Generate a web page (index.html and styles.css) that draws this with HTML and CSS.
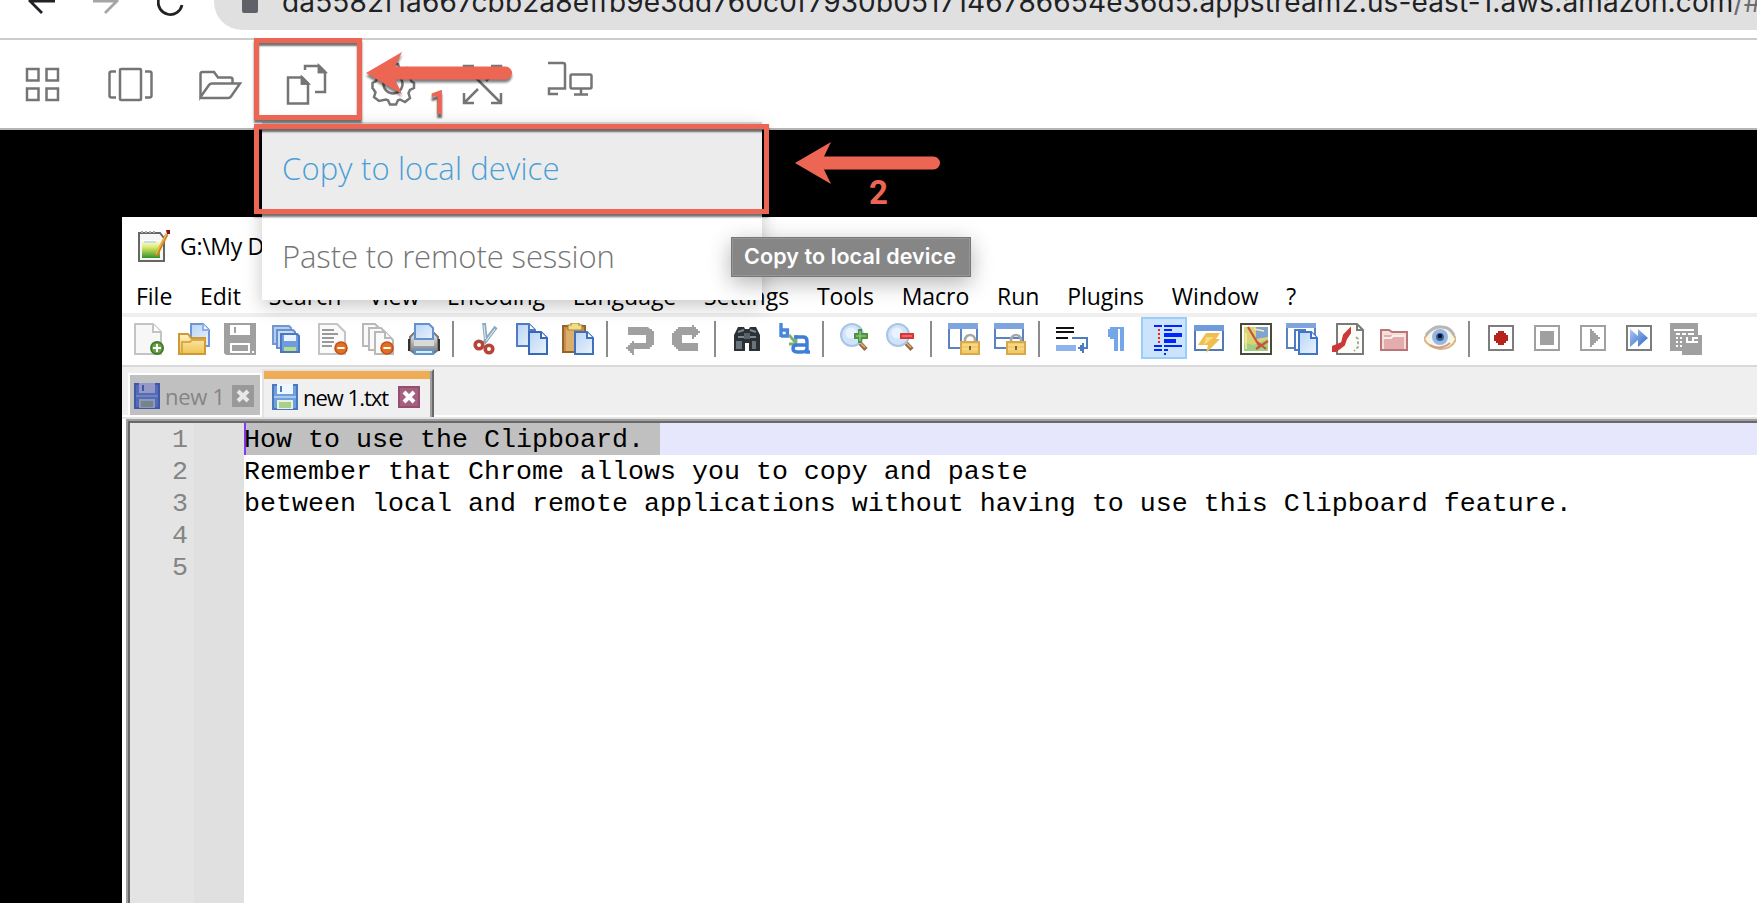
FILE: index.html
```html
<!DOCTYPE html>
<html lang="en">
<head>
<meta charset="utf-8">
<title>AppStream session</title>
<link rel="stylesheet" href="styles.css">
</head>
<body>
<svg class="defs" width="0" height="0">
  <defs>
    <linearGradient id="sky" x1="0" y1="0" x2="1" y2="1"><stop offset="0" stop-color="#b9d5f6"/><stop offset="1" stop-color="#eaf3fd"/></linearGradient>
    <linearGradient id="gold" x1="0" y1="0" x2="0" y2="1"><stop offset="0" stop-color="#fff3c4"/><stop offset="1" stop-color="#eec24f"/></linearGradient>
    <linearGradient id="blue" x1="0" y1="0" x2="1" y2="1"><stop offset="0" stop-color="#a9c8f3"/><stop offset="1" stop-color="#2f66c4"/></linearGradient>
    <linearGradient id="steel" x1="0" y1="0" x2="0" y2="1"><stop offset="0" stop-color="#eee"/><stop offset="1" stop-color="#777"/></linearGradient>
    <linearGradient id="grass" x1="0" y1="0" x2="0" y2="1"><stop offset="0" stop-color="#fff"/><stop offset=".4" stop-color="#dfe96a"/><stop offset="1" stop-color="#2f9427"/></linearGradient>
    <symbol id="minus" viewBox="0 0 7 7"><circle cx="3.5" cy="3.5" r="3.4" fill="#c4501a"/><circle cx="3.5" cy="3.5" r="2.6" fill="#e2701f"/><path d="M1.7 3h3.6v1H1.700z" fill="#fff"/></symbol>
    <symbol id="lens" viewBox="0 0 16 16"><path d="M9.500 9.500l3.500 3.700" stroke="#9b6a43" stroke-width="2.200"/><path d="M9.500 9.200l3 3" stroke="#d9b083" stroke-width=".7"/><circle cx="6" cy="6" r="5.500" fill="#cfe3fa" stroke="#a9c4e6"/><circle cx="5.500" cy="5" r="2.800" fill="#e8f3fe"/></symbol>
    <symbol id="lock" viewBox="0 0 10 11"><path d="M2.500 5V3.500a2.500 2.500 0 0 1 5 0V5" fill="none" stroke="#a8a8a8" stroke-width="1.300"/><rect x=".5" y="4.500" width="9" height="6" fill="#f3cb69" stroke="#d9a84a"/><path d="M1 6h8M1 8h8" stroke="#fbe3a0" stroke-width=".6"/><rect x="4.500" y="6.500" width="1" height="2" fill="#7d6336"/></symbol>
    <symbol id="floppy" viewBox="0 0 13 13"><rect width="13" height="13" fill="#4a78bd"/><rect x="1" y="1" width="11" height="11" fill="#6f9fdf"/><rect x="2.500" width="8" height="5" fill="#eef6ff"/><rect x="4" y="1" width="1" height="3" fill="#4a78bd"/><rect x="1" y="6" width="11" height="1" fill="#a9c8ee"/><rect x="2.500" y="8" width="8" height="4.500" fill="#e7f2e0"/><rect x="3.500" y="9" width="6" height="3" fill="#a9d08a"/></symbol>
  </defs>
</svg>

<header class="browser">
  <div class="nav">
    <svg class="nav-back" width="28" height="30" viewBox="0 0 28 30" fill="none" stroke="#202124" stroke-width="2.800"><path d="M27 1H3M14 13L2 1l12-12"/></svg>
    <svg class="nav-forward" width="28" height="30" viewBox="0 0 28 30" fill="none" stroke="#a5a5a5" stroke-width="2.800"><path d="M0 1h24M12 13L24 1 12-11"/></svg>
    <svg class="nav-reload" width="28" height="30" viewBox="0 0 28 30" fill="none" stroke="#202124" stroke-width="2.800"><path d="M1.500 0a12 12 0 0 0 23.500 5"/></svg>
  </div>
  <div class="address">
    <span class="padlock"></span>
    <span class="url">da5582f1a667cbb2a8effb9e3dd760c0f7930b0517146786654e36d5.appstream2.us-east-1.aws.amazon.com<span class="url-path">/#</span></span>
  </div>
</header>

<nav class="session-bar">
  <svg class="session-icon" viewBox="0 0 48 48"><path d="M4 9h11.500v11.500H4zM23.500 9H35v11.500H23.500zM4 28.500h11.500V40H4zM23.500 28.500H35V40H23.500z"/></svg>
  <svg class="session-icon icon-windows" viewBox="0 0 48 48"><rect x="13" y="9" width="21" height="31" rx="1"/><path d="M9 11.500H4.500q-2 0-2 2v22q0 2 2 2H9M38 11.500h4.500q2 0 2 2v22q0 2-2 2H38"/></svg>
  <svg class="session-icon icon-folder" viewBox="0 0 48 48"><path d="M4.500 36V14q0-2 2-2H18l4 5.500h12.500q2 0 2 2V23M4.500 37l8.500-12q1-1.500 3-1.500h28L35 36.500q-1 1.500-3 1.500H6q-2 0-1.500-1.500z"/></svg>
  <svg class="session-icon icon-copy" viewBox="0 0 48 48"><path d="M5 17.500h14l6 6V43.500H5zM19 17.500v6h6M22 10V6h14l6 6v20H32M36 6v6h6"/><path class="solid" d="M19 17.500l6 6h-6zM36 6l6 6h-6z"/></svg>
  <svg class="session-icon icon-gear" viewBox="0 0 48 48"><path d="M20 4h8l1.500 5.500 3 1.300 5-2.800 5.500 5.500-2.800 5 1.300 3L44 23v5l-4 2-1.500 3 1.500 5-5 4-5-2.500-2 .8-2 4.200h-6l-2-4.200-2-.8L9 41l-5-4 1.500-4.500L4 30l-1.500-2v-5l3.500-2 1.300-3-2.800-5L10 7.500l5 2.800 3-1.300z"/><circle cx="23" cy="24" r="9.500"/></svg>
  <svg class="session-icon icon-expand" viewBox="0 0 48 48"><path d="M5 16V6h10M5 6l37 37M32 43h10V33M32 6h10v10M42 6L27 21M19 29L5 43M5 33v10h10"/></svg>
  <svg class="session-icon icon-displays" viewBox="0 0 48 48"><path d="M1 3h15q2 0 2 2v23.500H2V34h9"/><rect x="23.500" y="14.500" width="21" height="14" rx="1.500"/><path d="M34 29v5M27 34.500h14"/></svg>
</nav>

<main class="remote">
  <section class="editor-window">
    <div class="title-bar">
      <svg class="app-icon" viewBox="0 0 16 16"><path d="M.5 1.500H11l2 2.500v11.500H.5z" fill="#f6f6f6" stroke="#666"/><path d="M1.500 1h8" stroke="#aaa" stroke-dasharray="1 1"/><path d="M2 5h9v9H2z" fill="url(#grass)"/><path d="M3 6h6" stroke="#c9dbe8"/><path d="M14.500 2L9 13" stroke="#c9841d" stroke-width="1.600"/><path d="M14.200 2L9 12" stroke="#f2c35c" stroke-width=".6"/><path d="M14 0h2v2h-1.500z" fill="#8a1212"/></svg>
      <span>G:\My D</span>
    </div>
    <div class="menu-bar">
      <span>File</span><span>Edit</span><span>Search</span><span>View</span><span>Encoding</span><span>Language</span><span>Settings</span><span>Tools</span><span>Macro</span><span>Run</span><span>Plugins</span><span>Window</span><span>?</span>
    </div>
    <div class="tool-bar">
      <div class="tool"><svg viewBox="0 0 16 16"><path d="M1.500.5h9l4 4v11h-13z" fill="#f7f7f7" stroke="#c4c4c4"/><path d="M10.500.5v4h4" fill="#fff" stroke="#c4c4c4"/><circle cx="12.500" cy="12.500" r="3.500" fill="#3f7a28"/><circle cx="12.500" cy="12.500" r="2.600" fill="#69a345"/><path d="M12 10.500h1V12h1.500v1H13v1.500h-1V13h-1.500v-1H12z" fill="#fff"/></svg></div>
      <div class="tool"><svg viewBox="0 0 16 16"><path d="M6.500.5h6l3 3v8h-9z" fill="url(#sky)" stroke="#6f95d8"/><path d="M12.500.5v3h3" fill="#eef5ff" stroke="#8fb0e4"/><path d="M.5 15.500v-10h4.500l1.500 2h7v8z" fill="url(#gold)" stroke="#cf9a33"/><path d="M2 15V9.500h4l1-1h6.500" fill="none" stroke="#d9a94c"/></svg></div>
      <div class="tool"><svg viewBox="0 0 16 16"><path d="M0 0h16v16H1l-1-1z" fill="#a0a0a0"/><path d="M3 1h10v5H3zM3 10h10v5H3z" fill="#fff"/><path d="M5 2h1v3H5zM4 11h8v3H4z" fill="#a0a0a0"/><path d="M14 14h1v1h-1z" fill="#fff"/></svg></div>
      <div class="tool"><svg viewBox="0 0 16 16"><path d="M1.500 1.500h8l1 1v8h-9z" fill="#b5cdf0" stroke="#7397d0"/><path d="M3.500 3.500h8l1 1v8h-9z" fill="#c9dbf5" stroke="#6a90cc"/><path d="M5.500 5.500h8l1 1v8h-9z" fill="#6e9ce2" stroke="#4a78c0"/><path d="M7 6h6v3H7z" fill="#eaf3ff"/><path d="M7 12h6v2H7z" fill="#b7dc83"/></svg></div>
      <div class="tool"><svg viewBox="0 0 16 16"><path d="M1.500.5h9l4 4v11h-13z" fill="#fafafa" stroke="#c4c4c4"/><path d="M3 3.500h6M3 5.500h8M3 7.500h6M3 9.500h6M3 11.500h5" stroke="#999"/><use href="#minus" x="9" y="9" width="7" height="7"/></svg></div>
      <div class="tool"><svg viewBox="0 0 16 16"><g fill="#fafafa" stroke="#b9b9b9"><path d="M.5.5h6l2 2v9h-8z"/><path d="M3.500 2.500h6l2 2v9h-8z"/><path d="M6.500 4.500h5l4 4v7h-9z"/><path d="M11.500 4.500v3h3"/></g><use href="#minus" x="9" y="9" width="7" height="7"/></svg></div>
      <div class="tool"><svg viewBox="0 0 16 16"><path d="M1 7l2-2h10l2 2v6.500l-2 1.500H3l-2-1.500z" fill="url(#steel)" stroke="#777"/><path d="M3.500 8V.5h7l2 2V8z" fill="url(#sky)" stroke="#6293cf"/><path d="M3 8.500h10v3H3z" fill="#d9d9d9"/><path d="M.5 8v6M15.500 8v6" stroke="#333"/><path d="M3.500 13.500h9v2h-9z" fill="#dcecfd" stroke="#5f96cd"/></svg></div>
      <i class="divider"></i>
      <div class="tool"><svg viewBox="0 0 16 16"><path d="M7 0l1 9M13 2L7 10" stroke="#8ba8bd" stroke-width="1.900"/><path d="M7 1l.7 7M12.500 3L8 9" stroke="#dbe8f0" stroke-width=".6"/><circle cx="4.500" cy="11" r="1.900" fill="#fff" stroke="#b5443a" stroke-width="1.800"/><circle cx="9.500" cy="13" r="1.900" fill="#fff" stroke="#b5443a" stroke-width="1.800"/></svg></div>
      <div class="tool"><svg viewBox="0 0 16 16"><path d="M.5.5h6l3 3v8h-9z" fill="url(#sky)" stroke="#4d7cc4"/><path d="M6.500.5v3h3" fill="#fff" stroke="#4d7cc4"/><path d="M6.500 4.500h6l3 3v8h-9z" fill="url(#sky)" stroke="#3769b8"/><path d="M12.500 4.500v3h3" fill="#fff" stroke="#3769b8"/></svg></div>
      <div class="tool"><svg viewBox="0 0 16 16"><rect x=".5" y="1.500" width="11" height="13" fill="#c98f48" stroke="#936329"/><path d="M2 3h4v11H2z" fill="#dcae6c"/><path d="M3 1h1.500V0h4v1H10v2.500H3z" fill="#f4dc83" stroke="#a8853c" stroke-width=".6"/><path d="M6.500 4.500h6l3 3v8h-9z" fill="url(#sky)" stroke="#3f70bc"/><path d="M12.500 4.500v3h3" fill="#fff" stroke="#3f70bc"/></svg></div>
      <i class="divider"></i>
      <div class="tool"><svg viewBox="0 0 16 16" fill="#a0a0a0"><path d="M2 2h10l1 1h1v1h1v7h-1v1h-1v1H5v3H4v-1H3v-1H2v-1H1v-1h1v-1h1v-1h1V9h1v1h6V6H2z"/></svg></div>
      <div class="tool"><svg viewBox="0 0 16 16" fill="#a0a0a0"><path d="M4 2h7V1h1v1h1v1h1v1h1v1h-1v1h-1v1h-1v1h-1V6H6v4h8v4H4v-1H3v-1H2v-1H1V5h1V4h1V3h1z"/></svg></div>
      <i class="divider"></i>
      <div class="tool"><svg viewBox="0 0 16 16"><path d="M3 2h3l.5 1h2L9 2h3l2 4v8H8.500v-4h-2v4H1V6z" fill="#2b3035"/><path d="M3 4.500l3-1M9 3.500l3 1M3 7h3M9 7h3" stroke="#7d8790"/><path d="M2 9h3v4H2zM10 9h2v4h-2z" fill="#69757e"/><path d="M6 5h3v3H6z" fill="#59626b"/></svg></div>
      <div class="tool"><svg viewBox="0 0 16 16" fill="none"><path d="M1.500 0v7M1.500 3.500h3.200v3H1.500" stroke="#4887da" stroke-width="1.700"/><path d="M5.500 6l3.500 4M9 6v4.500H5.500" stroke="#7daf75" stroke-width="1.400"/><path d="M8 7h4.500q2 0 2 2v5.500H16M14 11H9.500q-2 0-2 1.700t2 1.800H12q2.500 0 2.500-2" stroke="#3f7ed8" stroke-width="1.700"/></svg></div>
      <i class="divider"></i>
      <div class="tool"><svg viewBox="0 0 16 16"><use href="#lens" width="16" height="16"/><path d="M9 3h2v2h3v3h-3v2H9V8H7V5h2z" fill="#4e9140"/><path d="M10 4v5M8 6.500h5" stroke="#8bc474" stroke-width=".8"/></svg></div>
      <div class="tool"><svg viewBox="0 0 16 16"><use href="#lens" width="16" height="16"/><path d="M7 5h7v3H7z" fill="#d93636"/><path d="M8 6h5v1H8z" fill="#f06a65"/></svg></div>
      <i class="divider"></i>
      <div class="tool"><svg viewBox="0 0 16 16"><path d="M.5.5h14v12H.5z" fill="#fff" stroke="#5b82c2"/><path d="M0 0h15v3H0z" fill="#7fa5de"/><path d="M6.500 3v9" stroke="#5b82c2"/><use href="#lock" x="6" y="5" width="10" height="11"/></svg></div>
      <div class="tool"><svg viewBox="0 0 16 16"><path d="M.5.5h14v12H.5z" fill="#fff" stroke="#5b82c2"/><path d="M0 0h15v3H0z" fill="#7fa5de"/><path d="M1 7.500h13" stroke="#5b82c2"/><use href="#lock" x="6" y="5" width="10" height="11"/></svg></div>
      <i class="divider"></i>
      <div class="tool"><svg viewBox="0 0 16 16" class="crisp"><path d="M0 2h9v1H0zM0 4h9v1H0zM0 7h6v1H0z" fill="#111"/><path d="M0 11h10v3H0z" fill="#8db2ec"/><path d="M8 7h8v6h-1V8H8zM11 12h1v-1h1v-1h1v2h2v1h-2v2h-1v-1h-1v-1h-1z" fill="#4d7cc4"/></svg></div>
      <div class="tool"><svg viewBox="0 0 16 16" class="crisp"><path d="M4 2h7v12H9V3H8v11H6V8H4V7H3V3h1z" fill="#74a7ea"/></svg></div>
      <div class="tool pressed"><svg viewBox="0 0 16 16" class="crisp"><path d="M2 1h4v1H2zM7 1h9v1H7zM7 3h4v1H7zM7 5h9v2H7zM7 8h6v2H7zM7 11h9v1H7zM2 11h4v1H2zM2 13h4v1H2zM7 13h2v1H7zM7 15h1v1H7z" fill="#0026ff"/><path d="M4 3h1v1H4zM4 5h1v1H4zM4 7h1v1H4zM4 9h1v1H4z" fill="#f32020"/></svg></div>
      <div class="tool"><svg viewBox="0 0 16 16"><path d="M.5 1.500h14v12H.5z" fill="#fff" stroke="#5479b4"/><path d="M0 1h15v3H0z" fill="#6e9bdc"/><path d="M6 5h7l-2 3h2l-7 7 1-4H2z" fill="#eebf4e"/><path d="M6 7h4L5 11z" fill="#f8dc83"/></svg></div>
      <div class="tool"><svg viewBox="0 0 16 16"><path d="M.5.5h15v15H.5z" fill="#fff" stroke="#4a4b3c"/><path d="M2 2h12v12H2z" fill="#dcd276"/><path d="M8 2h6v5l-6 1z" fill="#7fa4d0"/><path d="M2 10l5 1 7-3v6H2z" fill="#9fcf82"/><path d="M4 2l6 10M14 9l-6 4M8 9l5 4" stroke="#cc513a" stroke-width="1.100"/><path d="M3 5v8M7 3l5 1" stroke="#f5efa7" stroke-width=".7"/></svg></div>
      <div class="tool"><svg viewBox="0 0 16 16"><path d="M.5.500h14v12H.5z" fill="#fff" stroke="#5b82c2"/><path d="M0 0h15v2.500H0z" fill="#7fa5de"/><path d="M4.500 3.500h5v10h-5z" fill="#fff" stroke="#4d7cc4"/><path d="M6.500 4.500h6l3 3v8h-9z" fill="url(#sky)" stroke="#3f74c8"/><path d="M12.500 4.500v3h3" fill="#fff" stroke="#3f74c8"/></svg></div>
      <div class="tool"><svg viewBox="0 0 16 16"><path d="M2.500.5h10l3 3v12h-13z" fill="#fdfdf8" stroke="#7b7b7b"/><path d="M12.500.5v3h3" fill="none" stroke="#7b7b7b"/><path d="M9 3L6 6l-1 4-5 2v2h2l4-3 1-3 2-3z" fill="#cc3838" stroke="#cc3838"/><path d="M12 7l1 1v4l-2 2" fill="none" stroke="#aaa" stroke-dasharray="1.500 1"/></svg></div>
      <div class="tool"><svg viewBox="0 0 16 16"><path d="M1.500 13.500v-10h4l1.500 1h7.500v9z" fill="#f3dede" stroke="#bd7474"/><path d="M3 6h10v7H3z" fill="#e3adad"/><path d="M2.500 7.500h4l1-1h6" fill="none" stroke="#f9ecec"/></svg></div>
      <div class="tool"><svg viewBox="0 0 16 16"><path d="M0 8Q3 2 9 2q4 0 7 6-2 5-8 5-6-1-8-5z" fill="#f7f5e8" stroke="#d8b688"/><path d="M1 6q4-5 8-4 4 0 6 4" fill="none" stroke="#b7b7b7" stroke-width="1.500"/><circle cx="8" cy="7" r="4" fill="#93b8e8"/><circle cx="8" cy="7" r="2" fill="#3f5f91"/><circle cx="8" cy="6.500" r="1.100" fill="#0b1020"/><path d="M3 11q5 3 10-1" fill="none" stroke="#d69a7f"/></svg></div>
      <i class="divider"></i>
      <div class="tool"><svg viewBox="0 0 16 16"><path d="M1.500 1.500h12v12h-12z" fill="#fff" stroke="#7d7d7d"/><path d="M6 4h3v1h1v1h1v3h-1v1H9v1H6v-1H5V9H4V6h1V5h1z" fill="#b62318"/></svg></div>
      <div class="tool"><svg viewBox="0 0 16 16"><path d="M1.500 1.500h12v12h-12z" fill="#fff" stroke="#a0a0a0"/><path d="M4 4h7v7H4z" fill="#a0a0a0"/></svg></div>
      <div class="tool"><svg viewBox="0 0 16 16"><path d="M1.500 1.500h12v12h-12z" fill="#fff" stroke="#a0a0a0"/><path d="M6 3h1v1h1v1h1v1h1v1h1v1h-1v1H9v1H8v1H7v1H6z" fill="#a0a0a0"/></svg></div>
      <div class="tool"><svg viewBox="0 0 16 16"><path d="M1.500 1.500h12v12h-12z" fill="#fff" stroke="#7d7d7d"/><path d="M3 3l4 3.500V3l5 4.500-5 4.500V8.500L3 12z" fill="url(#blue)"/></svg></div>
      <div class="tool"><svg viewBox="0 0 16 16" class="crisp"><path d="M0 0h14v6h2v10H6v-2H0z" fill="#a0a0a0"/><path d="M2 3h10v1H2zM3 5h2v1H3zM6 5h2v1H6zM9 5h3v1H9zM3 7h1v1H3zM5 7h1v1H5zM3 9h1v1H3zM5 9h1v1H5zM3 11h1v1H3zM5 11h1v1H5zM8 7h1v2h2V7h3v1h-2v1h2v1H8z" fill="#fff"/></svg></div>
    </div>
    <div class="tab-bar">
      <div class="tab inactive"><svg class="disk" viewBox="0 0 13 13"><use href="#floppy" width="13" height="13"/><rect width="13" height="13" fill="#35358c" opacity=".48"/></svg><span class="tab-name">new 1</span><svg class="close" viewBox="0 0 11 11"><rect width="11" height="11" fill="#999"/><path d="M3 3l5 5M8 3L3 8" stroke="#e8e8e8" stroke-width="2"/></svg></div>
      <div class="tab active"><svg class="disk" viewBox="0 0 13 13"><use href="#floppy" width="13" height="13"/></svg><span class="tab-name">new 1.txt</span><svg class="close" viewBox="0 0 11 11"><rect width="11" height="11" fill="#944f70"/><rect x="1" y="1" width="9" height="9" fill="#a4607e"/><path d="M3 3l5 5M8 3L3 8" stroke="#fff" stroke-width="2"/></svg></div>
    </div>
    <div class="editor">
      <div class="line-numbers"><div>1</div><div>2</div><div>3</div><div>4</div><div>5</div></div>
      <div class="fold-margin"></div>
      <div class="code">
        <div class="code-line current"><span class="selection">How to use the Clipboard. </span></div>
        <div class="code-line">Remember that Chrome allows you to copy and paste</div>
        <div class="code-line">between local and remote applications without having to use this Clipboard feature.</div>
      </div>
    </div>
  </section>
</main>

<div class="clipboard-menu">
  <div class="menu-item hovered">Copy to local device</div>
  <div class="menu-item">Paste to remote session</div>
</div>
<div class="tooltip">Copy to local device</div>

<div class="callout callout-icon"></div>
<div class="callout callout-item"></div>
<svg class="arrow arrow-one" viewBox="0 0 148 44"><path d="M0 21L36 0l-7 14.500h110.500a6.500 6.500 0 0 1 0 13H29L36 42z"/></svg>
<svg class="arrow arrow-two" viewBox="0 0 148 44"><path d="M0 21L36 0l-7 14.500h109.500a6.500 6.500 0 0 1 0 13H29L36 42z"/></svg>
<span class="step step-one">1</span>
<span class="step step-two">2</span>
</body>
</html>
```

FILE: styles.css
```css
* { box-sizing: border-box; }
body {
  position: relative;
  width: 1757px;
  height: 903px;
  margin: 0;
  overflow: hidden;
  background: #000;
  font-family: "Open Sans", "Noto Sans", sans-serif;
}
.defs { position: absolute; }

/* Browser chrome */
.browser {
  display: flex;
  height: 40px;
  background: #fff;
  border-bottom: 2px solid #ccc;
}
.nav { display: flex; flex-shrink: 0; width: 214px; padding-left: 28px; }
.nav-forward { margin-left: 37px; }
.nav-reload { margin-left: 36px; }
.address {
  display: flex;
  flex: 1;
  min-width: 0;
  height: 30px;
  padding-left: 28px;
  overflow: hidden;
  background: #e0e0e0;
  border-bottom-left-radius: 28px;
}
.padlock { flex-shrink: 0; width: 16px; height: 13px; background: #5f6068; border-radius: 0 0 2px 2px; }
.url {
  flex-shrink: 0;
  margin: -15px 0 0 24px;
  color: #202124;
  font: 28px/34px Inter, Roboto, sans-serif;
  letter-spacing: .13px;
  white-space: nowrap;
}
.url-path { color: #6b6d72; }

/* Streaming session toolbar */
.session-bar {
  display: flex;
  height: 90px;
  padding: 20px 0 0 23px;
  background: #fff;
  border-bottom: 2px solid #b5b5b5;
}
.session-icon {
  width: 48px;
  height: 48px;
  fill: none;
  stroke: #757575;
  stroke-width: 2.5;
}
.session-icon .solid { fill: #757575; }
.icon-windows { margin-left: 36px; }
.icon-folder { margin-left: 41px; }
.icon-copy { margin-left: 39px; }
.icon-gear { margin-left: 39px; }
.icon-expand { margin-left: 41px; }
.icon-displays { margin-left: 40px; }

/* Remote desktop */
.remote { height: 773px; padding: 87px 0 0 122px; background: #000; }
.editor-window { display: flex; flex-direction: column; height: 686px; background: #fff; }
.title-bar {
  display: flex;
  align-items: center;
  gap: 10px;
  height: 60px;
  padding: 0 0 2px 16px;
  font-size: 23px;
  letter-spacing: -.3px;
}
.app-icon { width: 32px; height: 32px; }
.menu-bar {
  display: flex;
  align-items: center;
  gap: 27.8px;
  height: 36px;
  padding: 2px 0 0 14px;
  font-size: 23px;
  letter-spacing: -.03px;
}
.tool-bar {
  display: flex;
  align-items: flex-start;
  height: 54px;
  padding-left: 3px;
  border-top: 4px solid #efefef;
  border-bottom: 2px solid #d9d9d9;
}
.tool {
  display: flex;
  align-items: center;
  justify-content: center;
  width: 46px;
  height: 44px;
}
.tool svg { width: 32px; height: 32px; }
.crisp { shape-rendering: crispEdges; }
.tool.pressed { height: 42px; padding: 2px 0 0 4px; background: #cce4fb; border: 2px solid #99cdfb; }
.divider { width: 16px; height: 40px; padding: 4px 0 0 5px; }
.divider::before { content: ""; display: block; width: 2px; height: 36px; background: #8c8c8c; }

.tab-bar {
  display: flex;
  align-items: flex-end;
  height: 52px;
  padding-left: 6px;
  background: #efefef;
  border-bottom: 2px solid #e3e3e3;
  box-shadow: inset 0 -2px #fff;
}
.tab { display: flex; align-items: center; font-size: 22px; }
.tab.inactive {
  width: 134px;
  height: 44px;
  padding: 1px 0 0 4px;
  background: #c0c0c0;
  border: 2px solid #fff;
  color: #848484;
}
.tab.active {
  width: 172px;
  height: 48px;
  padding: 5px 0 0 8px;
  border-top: 2px solid #e3e3e3;
  border-left: 2px solid #e3e3e3;
  border-right: 2px solid #696969;
  box-shadow: inset -2px 0 #a0a0a0;
  background: linear-gradient(#f0ac55 8px, #f0f0f0 8px);
}
.disk { width: 26px; height: 26px; margin-right: 5px; }
.tab-name { width: 67px; letter-spacing: -.3px; white-space: nowrap; }
.active .tab-name { width: 95px; letter-spacing: -1px; }
.close { width: 22px; height: 22px; }

.editor {
  display: flex;
  flex: 1;
  margin-left: 4px;
  border-top: 2px solid #a0a0a0;
  border-left: 2px solid #a0a0a0;
  box-shadow: inset 2px 2px #696969;
  padding: 2px 0 0 2px;
  font: 26.67px/34px "Liberation Mono", monospace;
}
.line-numbers { width: 64px; padding-right: 6px; background: #e4e4e4; color: #848484; text-align: right; }
.line-numbers div { height: 32px; }
.fold-margin { width: 50px; background: #e0e0e0; }
.code { flex: 1; }
.code-line { height: 32px; white-space: pre; }
.current { background: #e6e6fc; }
.selection { display: inline-block; height: 32px; background: #c0c0c0; box-shadow: inset 2px 0 #8038ff; }

/* Clipboard menu over the desktop */
.clipboard-menu {
  position: absolute;
  top: 122px;
  left: 262px;
  width: 500px;
  height: 178px;
  background: #fff;
  border-top: 2px solid #ccc;
  box-shadow: 0 6px 18px rgba(0, 0, 0, .22);
}
.menu-item {
  height: 88px;
  padding-left: 20px;
  color: #757575;
  font-size: 31px;
  font-weight: 300;
  letter-spacing: -.1px;
  line-height: 89px;
  white-space: nowrap;
}
.menu-item.hovered { background: #ececec; color: #4a9fd6; letter-spacing: .15px; }
.tooltip {
  position: absolute;
  top: 237px;
  left: 731px;
  width: 240px;
  height: 40px;
  padding-left: 12px;
  background: #868686;
  border: 1px solid #777;
  box-shadow: 0 6px 22px rgba(0, 0, 0, .3), inset 0 0 0 1px #969696;
  color: #fff;
  font: 600 21.5px/37px Inter, sans-serif;
  letter-spacing: .1px;
  white-space: nowrap;
}

/* Instruction marks */
.callout {
  position: absolute;
  border: 5px solid #ed6653;
  box-shadow: 0 3px 2px rgba(0, 0, 0, .55), inset 0 3px 2px rgba(0, 0, 0, .55);
}
.callout-icon { top: 38px; left: 254px; width: 108px; height: 82px; }
.callout-item { top: 124px; left: 254px; width: 515px; height: 90px; }
.arrow {
  position: absolute;
  width: 148px;
  height: 44px;
  fill: #ed6653;
  overflow: visible;
  filter: drop-shadow(0 3px 1px rgba(0, 0, 0, .5));
}
.arrow-one { top: 52px; left: 366px; }
.arrow-two { top: 142px; left: 795px; }
.step {
  position: absolute;
  color: #ed6653;
  font: bold 33px/36px Roboto, sans-serif;
  text-shadow: 0 4px 2px rgba(0, 0, 0, .6);
}
.step-one { top: 85px; left: 429px; }
.step-two { top: 175px; left: 869px; }
```
